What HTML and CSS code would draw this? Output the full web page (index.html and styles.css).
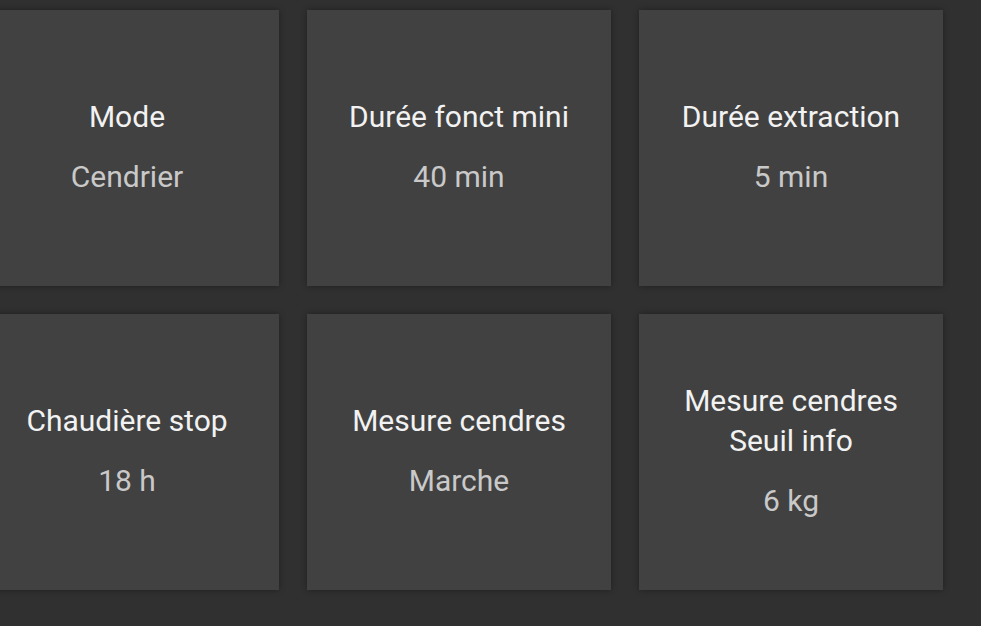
FILE: index.html
```html
<!DOCTYPE html>
<html lang="fr">
<head>
<meta charset="utf-8">
<title>Cendrier</title>
<link rel="stylesheet" href="styles.css">
</head>
<body>
<div class="grid">
  <div class="card"><div class="title">Mode</div><div class="value">Cendrier</div></div>
  <div class="card"><div class="title">Durée fonct mini</div><div class="value">40 min</div></div>
  <div class="card"><div class="title">Durée extraction</div><div class="value">5 min</div></div>
  <div class="card"><div class="title">Chaudière stop</div><div class="value">18 h</div></div>
  <div class="card"><div class="title">Mesure cendres</div><div class="value">Marche</div></div>
  <div class="card"><div class="title">Mesure cendres<br>Seuil info</div><div class="value">6 kg</div></div>
</div>
</body>
</html>
```
FILE: styles.css
```css
html, body {
  margin: 0;
  padding: 0;
  background: #303030;
  width: 981px;
  height: 626px;
  overflow: hidden;
  font-family: Roboto, "Open Sans", sans-serif;
}
.grid {
  display: grid;
  grid-template-columns: repeat(3, 304px);
  grid-auto-rows: 276px;
  gap: 28px;
  margin-left: -25px;
  padding-top: 10px;
}
.card {
  background: #414141;
  box-shadow: 0 0 6px rgba(0, 0, 0, 0.35);
  display: flex;
  flex-direction: column;
  align-items: center;
  justify-content: center;
  gap: 20px;
  padding-bottom: 2px;
  text-align: center;
}
.title {
  color: #f2f2f2;
  font-size: 30px;
  line-height: 40px;
}
.value {
  color: #c9c9c9;
  font-size: 30px;
  line-height: 40px;
}
```
